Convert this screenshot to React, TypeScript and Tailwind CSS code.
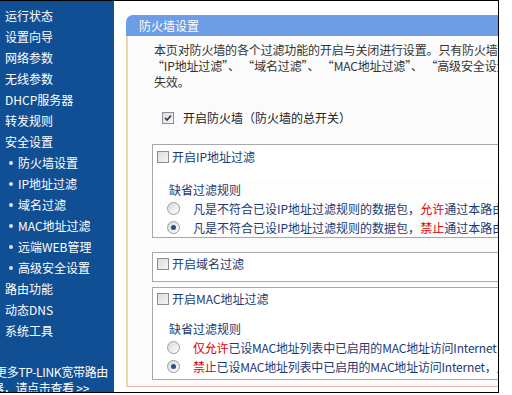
import React from "react";

const menu: { label: string; sub?: boolean }[] = [
  { label: "运行状态" },
  { label: "设置向导" },
  { label: "网络参数" },
  { label: "无线参数" },
  { label: "DHCP服务器" },
  { label: "转发规则" },
  { label: "安全设置" },
  { label: "防火墙设置", sub: true },
  { label: "IP地址过滤", sub: true },
  { label: "域名过滤", sub: true },
  { label: "MAC地址过滤", sub: true },
  { label: "远端WEB管理", sub: true },
  { label: "高级安全设置", sub: true },
  { label: "路由功能" },
  { label: "动态DNS" },
  { label: "系统工具" },
];

function CheckBox({ checked = false }: { checked?: boolean }) {
  return (
    <span className="relative inline-block w-[12px] h-[12px] shrink-0 border border-[#8e8e8e] bg-gradient-to-br from-[#dcdcdc] to-[#f6f6f6]">
      {checked && (
        <svg className="absolute inset-0" viewBox="0 0 10 10" width="10" height="10">
          <path d="M2 4.8 L4 7 L8 2.6" fill="none" stroke="#2a3a5a" strokeWidth="1.6" />
        </svg>
      )}
    </span>
  );
}

function Radio({ checked = false }: { checked?: boolean }) {
  return (
    <span className="flex items-center justify-center w-[13px] h-[13px] shrink-0 rounded-full border border-[#9c9c9c] bg-gradient-to-br from-[#d8d8d8] to-white">
      {checked && <span className="w-[5px] h-[5px] rounded-full bg-[#2c4f86]" />}
    </span>
  );
}

export default function App() {
  return (
    <div
      className="w-[512px] h-[395px] bg-white overflow-hidden text-[12px]"
      style={{ fontFamily: '"Noto Sans CJK SC", "Noto Sans", sans-serif' }}
    >
      <div className="flex w-[499px] h-[393px] border-t border-r border-b border-black overflow-hidden">
        {/* 左侧菜单 */}
        <div className="w-[114px] shrink-0 bg-[#114f95] text-white pt-[4px] overflow-hidden">
          {menu.map((m) => (
            <div
              key={m.label}
              className={`h-[21px] leading-[21px] flex items-center whitespace-nowrap ${m.sub ? "pl-[9px]" : "pl-[5px]"}`}
            >
              {m.sub && <span className="w-[4px] h-[4px] rounded-full bg-[#d8e4f0] mr-[5px]" />}
              {m.label}
            </div>
          ))}
          <div className="mt-[23px] h-[16px] leading-[16px] whitespace-nowrap -ml-[5px] tracking-[-0.3px]">更多TP-LINK宽带路由</div>
          <div className="h-[16px] leading-[16px] whitespace-nowrap -ml-[8px] tracking-[-0.3px]">器，请点击查看 &gt;&gt;</div>
        </div>

        {/* 主体 */}
        <div className="flex-1 overflow-hidden pt-[14px]">
          <div className="ml-[12px] w-[420px]">
            <div className="h-[21px] leading-[21px] bg-[#6d9de4] rounded-tl-[7px] text-white pl-[13px]">
              防火墙设置
            </div>
            <div className="border-l-2 border-b border-l-[#e6d8a8] border-b-[#f0b4b0] bg-[#fbfbfb] pb-[6px]">
              <div className="pl-[26px] pt-[6px] text-[#333] leading-[16px] whitespace-nowrap tracking-[-0.15px]">
                <div>本页对防火墙的各个过滤功能的开启与关闭进行设置。只有防火墙的总开关是开启的时候，后续的</div>
                <div className="-ml-[2px]">“IP地址过滤”、 “域名过滤”、 “MAC地址过滤”、 “高级安全设置”才能够生效，反之，则</div>
                <div>失效。</div>
              </div>

              <div className="mt-[18px] pl-[34px] h-[20px] flex items-center text-[#222]">
                <CheckBox checked />
                <span className="ml-[9px]">开启防火墙（防火墙的总开关）</span>
              </div>

              {/* IP地址过滤 */}
              <div className="mt-[16px] ml-[24px] border border-[#a8a8a8] bg-white text-[#1d3a72]">
                <div className="h-[24px] pl-[4px] flex items-center">
                  <CheckBox />
                  <span className="ml-[3px]">开启IP地址过滤</span>
                </div>
                <div className="bg-[#fdfdfd]">
                  <div className="mt-[12px] pl-[16px] h-[18px] leading-[18px]">缺省过滤规则</div>
                  <div className="pl-[14px] h-[19px] flex items-center whitespace-nowrap">
                    <Radio />
                    <span className="ml-[13px]">
                      凡是不符合已设IP地址过滤规则的数据包，<span className="text-[#e00000]">允许</span>通过本路由器
                    </span>
                  </div>
                  <div className="pl-[14px] h-[19px] flex items-center whitespace-nowrap">
                    <Radio checked />
                    <span className="ml-[13px]">
                      凡是不符合已设IP地址过滤规则的数据包，<span className="text-[#e00000]">禁止</span>通过本路由器
                    </span>
                  </div>
                </div>
              </div>

              {/* 域名过滤 */}
              <div className="mt-[14px] ml-[24px] border border-[#a8a8a8] bg-white text-[#1d3a72] pb-[6px]">
                <div className="h-[22px] pl-[4px] flex items-center">
                  <CheckBox />
                  <span className="ml-[3px]">开启域名过滤</span>
                </div>
              </div>

              {/* MAC地址过滤 */}
              <div className="mt-[5px] ml-[24px] border border-[#a8a8a8] bg-white text-[#1d3a72] pb-[3px]">
                <div className="h-[22px] pl-[4px] flex items-center">
                  <CheckBox />
                  <span className="ml-[3px]">开启MAC地址过滤</span>
                </div>
                <div className="mt-[10px] pl-[16px] h-[18px] leading-[18px]">缺省过滤规则</div>
                <div className="pl-[14px] h-[19px] flex items-center whitespace-nowrap">
                  <Radio />
                  <span className="ml-[13px] tracking-[-0.2px]">
                    <span className="text-[#e00000]">仅允许</span>已设MAC地址列表中已启用的MAC地址访问Internet
                  </span>
                </div>
                <div className="pl-[14px] h-[19px] flex items-center whitespace-nowrap">
                  <Radio checked />
                  <span className="ml-[13px] tracking-[-0.2px]">
                    <span className="text-[#e00000]">禁止</span>已设MAC地址列表中已启用的MAC地址访问Internet，允许其他MAC地址访问Internet
                  </span>
                </div>
              </div>
            </div>
          </div>
        </div>
      </div>
    </div>
  );
}
